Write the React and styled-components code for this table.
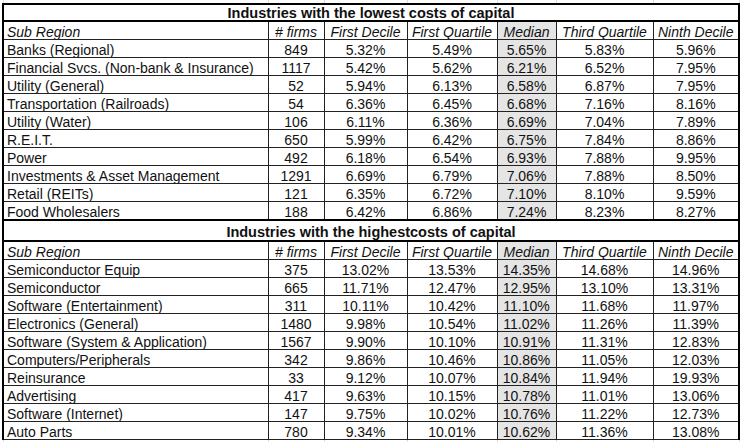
import React from 'react';
import styled, { createGlobalStyle } from 'styled-components';

const GlobalStyle = createGlobalStyle`
  body {
    margin: 0;
    background: #ffffff;
    font-family: "Liberation Sans", Arial, sans-serif;
  }
`

const Sheet = styled.table`
  margin-left: 2px;
  border-collapse: collapse;
  table-layout: fixed;
  width: 736px;
  font-size: 14px;
  color: #111;
`

const GridRow = styled.tr`
  height: ${p => p.h}px;
`

const GridCell = styled.td`
  padding: 0;
  border-left: 1px solid #dcdcdc;
  border-right: 1px solid #dcdcdc;
`

const TitleRow = styled.tr`
  height: ${p => p.h}px;
`

const TitleCell = styled.td`
  padding: ${p => p.drop}px 0 0;
  border: 2px solid #000;
  font-weight: bold;
  font-size: 14.5px;
  text-align: center;
  line-height: 14px;
  vertical-align: top;
`

const Row = styled.tr`
  height: 18px;
`

const Cell = styled.td`
  padding: 3px 3px 0;
  border: 1px solid #222;
  line-height: 14px;
  vertical-align: top;
  white-space: nowrap;
  overflow: hidden;
  text-align: ${p => (p.left ? 'left' : 'center')};
  font-style: ${p => (p.head ? 'italic' : 'normal')};
  background: ${p => (p.shaded ? '#e5e5e5' : 'transparent')};
  border-left-width: ${p => (p.edge === 'left' ? '2px' : '1px')};
  border-right-width: ${p => (p.edge === 'right' ? '2px' : '1px')};
  border-left-color: ${p => (p.edge === 'left' ? '#000' : '#222')};
  border-right-color: ${p => (p.edge === 'right' ? '#000' : '#222')};
`

const widths = [265, 56, 83, 90, 59, 97, 86];
const headers = ['Sub Region', '# firms', 'First Decile', 'First Quartile', 'Median', 'Third Quartile', 'Ninth Decile'];

const lowest = [
  ['Banks (Regional)', '849', '5.32%', '5.49%', '5.65%', '5.83%', '5.96%'],
  ['Financial Svcs. (Non-bank & Insurance)', '1117', '5.42%', '5.62%', '6.21%', '6.52%', '7.95%'],
  ['Utility (General)', '52', '5.94%', '6.13%', '6.58%', '6.87%', '7.95%'],
  ['Transportation (Railroads)', '54', '6.36%', '6.45%', '6.68%', '7.16%', '8.16%'],
  ['Utility (Water)', '106', '6.11%', '6.36%', '6.69%', '7.04%', '7.89%'],
  ['R.E.I.T.', '650', '5.99%', '6.42%', '6.75%', '7.84%', '8.86%'],
  ['Power', '492', '6.18%', '6.54%', '6.93%', '7.88%', '9.95%'],
  ['Investments & Asset Management', '1291', '6.69%', '6.79%', '7.06%', '7.88%', '8.50%'],
  ['Retail (REITs)', '121', '6.35%', '6.72%', '7.10%', '8.10%', '9.59%'],
  ['Food Wholesalers', '188', '6.42%', '6.86%', '7.24%', '8.23%', '8.27%'],
];

const highest = [
  ['Semiconductor Equip', '375', '13.02%', '13.53%', '14.35%', '14.68%', '14.96%'],
  ['Semiconductor', '665', '11.71%', '12.47%', '12.95%', '13.10%', '13.31%'],
  ['Software (Entertainment)', '311', '10.11%', '10.42%', '11.10%', '11.68%', '11.97%'],
  ['Electronics (General)', '1480', '9.98%', '10.54%', '11.02%', '11.26%', '11.39%'],
  ['Software (System & Application)', '1567', '9.90%', '10.10%', '10.91%', '11.31%', '12.83%'],
  ['Computers/Peripherals', '342', '9.86%', '10.46%', '10.86%', '11.05%', '12.03%'],
  ['Reinsurance', '33', '9.12%', '10.07%', '10.84%', '11.94%', '19.93%'],
  ['Advertising', '417', '9.63%', '10.15%', '10.78%', '11.01%', '13.06%'],
  ['Software (Internet)', '147', '9.75%', '10.02%', '10.76%', '11.22%', '12.73%'],
  ['Auto Parts', '780', '9.34%', '10.01%', '10.62%', '11.36%', '13.08%'],
];

function edgeOf(i) {
  if (i === 0) return 'left';
  if (i === 6) return 'right';
  return undefined;
}

function Section({ title, h, drop, rows }) {
  return (
    <>
      <TitleRow h={h}>
        <TitleCell colSpan={7} drop={drop}>{title}</TitleCell>
      </TitleRow>
      <Row>
        {headers.map((t, i) => (
          <Cell key={t} head left={i === 0} shaded={i === 4} edge={edgeOf(i)}>{t}</Cell>
        ))}
      </Row>
      {rows.map(r => (
        <Row key={r[0]}>
          {r.map((v, i) => (
            <Cell key={i} left={i === 0} shaded={i === 4} edge={edgeOf(i)}>{v}</Cell>
          ))}
        </Row>
      ))}
    </>
  );
}

function Gap({ h }) {
  return (
    <GridRow h={h}>
      {widths.map((w, i) => <GridCell key={i} />)}
    </GridRow>
  );
}

export default function App() {
  return (
    <>
      <GlobalStyle />
      <Sheet>
        <colgroup>
          {widths.map((w, i) => <col key={i} style={{ width: w }} />)}
        </colgroup>
        <tbody>
          <Gap h={4} />
          <Section title="Industries with the lowest costs of capital" h={17} drop={1} rows={lowest} />
          <Section title="Industries with the highestcosts of capital" h={21} drop={4} rows={highest} />
          <Gap h={6} />
        </tbody>
      </Sheet>
    </>
  );
}
